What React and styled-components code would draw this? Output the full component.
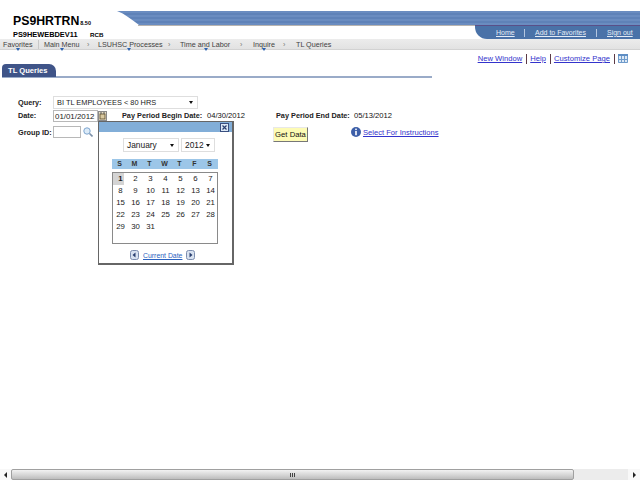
import React from 'react';
import styled, { createGlobalStyle } from 'styled-components';

const GlobalStyle = createGlobalStyle`
  html, body {
    margin: 0;
    padding: 0;
    background: #fff;
    overflow: hidden;
  }
  body {
    font-family: "Liberation Sans", Arial, sans-serif;
    font-size: 8px;
    color: #000;
  }
`;

const navItems = [
  { label: 'Favorites', width: 35, arrow: 12.5 },
  { label: 'Main Menu', width: 43, arrow: 15.5, sep: 'bar' },
  { label: 'LSUHSC Processes', width: 70, arrow: 28.5, sep: 'gt', sepWidth: 11 },
  { label: 'Time and Labor', width: 60, arrow: 23.5, sep: 'gt', sepWidth: 12 },
  { label: 'Inquire', width: 30, arrow: 8.5, sep: 'gt', sepWidth: 13 },
  { label: 'TL Queries', width: 50, sep: 'gt', sepWidth: 13 },
];

const week = ['S', 'M', 'T', 'W', 'T', 'F', 'S'];
const days = Array.from({ length: 31 }, (_, i) => i + 1);

const Page = styled.div`
  width: 640px;
  height: 480px;
  display: flex;
  flex-direction: column;
  overflow: hidden;
  position: relative;
`;

const Header = styled.header`
  height: 39px;
  display: flex;
  flex: none;
`;

const Brand = styled.div`
  box-sizing: border-box;
  width: 117px;
  padding: 15px 0 0 13px;
  flex: none;
`;

const AppName = styled.div`
  font-size: 12.3px;
  line-height: 13px;
  font-weight: bold;
  white-space: nowrap;

  small {
    font-size: 5.5px;
    margin-left: 1px;
  }
`;

const Server = styled.div`
  margin-top: 0;
  font-size: 7.4px;
  line-height: 10px;
  font-weight: bold;
  display: flex;
  white-space: nowrap;

  span:first-child {
    width: 77px;
  }
  span:last-child {
    font-size: 6.2px;
  }
`;

const HeaderRight = styled.div`
  flex: 1;
  padding-top: 11px;
  display: flex;
  flex-direction: column;
`;

const Banner = styled.div`
  height: 14px;
  background: repeating-linear-gradient(180deg, #6a8cc0 0 2px, #5f82b8 2px 4px);
  clip-path: path('M0 0 C8 3 14 8 22 14 L523 14 L523 0 Z');
`;

const BannerEdge = styled.div`
  height: 1px;
  margin-left: 21px;
  background: linear-gradient(90deg, #b8b4b0 0 337px, #5a4f88 337px);
`;

const TopLinks = styled.nav`
  margin-left: 358px;
  flex: 1;
  background: #4a72a8;
  border-bottom-left-radius: 12px;
  display: flex;
  align-items: center;
  padding-left: 21px;
`;

const TopLink = styled.a`
  box-sizing: border-box;
  color: #e4ecf6;
  font-size: 7px;
  line-height: 8px;
  text-decoration: underline;
  width: ${(p) => p.$width}px;
  margin-right: ${(p) => (p.$divided ? 10 : 0)}px;
  border-right: ${(p) => (p.$divided ? '1px solid #b4c6e0' : 'none')};
  white-space: nowrap;
`;

const NavBar = styled.nav`
  box-sizing: border-box;
  height: 11px;
  flex: none;
  background: linear-gradient(#ececec, #e2e2e2);
  border-bottom: 1px solid #d2d2d2;
  display: flex;
  align-items: center;
  padding-left: 3px;
  color: #3f3f3f;
  font-size: 7.2px;
  white-space: nowrap;
`;

const NavItem = styled.span`
  position: relative;
  width: ${(p) => p.$width}px;
  flex: none;
`;

const NavArrow = styled.i`
  position: absolute;
  left: ${(p) => p.$left}px;
  bottom: -2px;
  width: 0;
  height: 0;
  border-left: 2.5px solid transparent;
  border-right: 2.5px solid transparent;
  border-top: 3px solid #2d62b0;
`;

const NavBarSep = styled.span`
  width: 1px;
  height: 9px;
  margin-right: 5px;
  background: #c8c8c8;
  flex: none;
`;

const NavGt = styled.span`
  color: #777;
  width: ${(p) => p.$width}px;
  flex: none;
`;

const UtilityRow = styled.div`
  display: flex;
  justify-content: flex-end;
  align-items: center;
  height: 13px;
  margin-top: 2px;
  padding-right: 12px;
  font-size: 7.65px;
`;

const BlueLink = styled.a`
  color: #3333cc;
  font-size: ${(p) => p.$size || 7.65}px;
  text-decoration: underline;
  white-space: nowrap;
`;

const Pipe = styled.span`
  width: 1px;
  height: 10px;
  margin: 0 3px 0 4px;
  background: #5c3a46;
`;

const TabStrip = styled.div`
  box-sizing: border-box;
  width: 430px;
  height: 14px;
  margin: -1px 0 0 2px;
  border-bottom: 2px solid #9aabc8;
  display: flex;
  align-items: flex-start;
  flex: none;
`;

const Tab = styled.div`
  box-sizing: border-box;
  width: 54px;
  height: 13px;
  background: #3f5488;
  border-radius: 4px 7px 0 0;
  color: #fff;
  font-size: 7.6px;
  font-weight: bold;
  line-height: 14px;
  padding-left: 6px;
`;

const Form = styled.div`
  padding: 17px 0 0 18px;
  display: flex;
  flex-direction: column;
`;

const Row = styled.div`
  display: flex;
  align-items: center;
  height: ${(p) => p.$height}px;
  white-space: nowrap;
`;

const Label = styled.span`
  font-size: 7.3px;
  font-weight: bold;
  color: #222;
  width: ${(p) => p.$width}px;
  flex: none;
`;

const Value = styled.span`
  font-size: 7.6px;
  color: #111;
  width: ${(p) => p.$width}px;
  flex: none;
`;

const SelectBox = styled.div`
  box-sizing: border-box;
  width: ${(p) => p.$width}px;
  height: ${(p) => p.$height || 13}px;
  border: 1px solid #dedede;
  background: #fff;
  display: flex;
  align-items: center;
  justify-content: space-between;
  padding: 0 4px 0 3px;
  font-size: ${(p) => p.$size || 7.4}px;
  color: #222;
  flex: none;

  &::after {
    content: '';
    border-left: 2.5px solid transparent;
    border-right: 2.5px solid transparent;
    border-top: 3px solid #111;
  }
`;

const TextBox = styled.div`
  box-sizing: border-box;
  width: ${(p) => p.$width}px;
  height: ${(p) => p.$height}px;
  border: 1px solid #b8b8b8;
  background: #fff;
  font-size: 7.9px;
  line-height: 11px;
  padding-left: 1px;
  color: #222;
  flex: none;
`;

const DateIcon = styled.svg`
  width: 9px;
  height: 10px;
  margin: 0 15px 0 0;
  flex: none;
`;

const SearchIcon = styled.svg`
  width: 10px;
  height: 10px;
  margin: 0 180px 0 2px;
  flex: none;
`;

const GetData = styled.button`
  box-sizing: border-box;
  width: 35px;
  height: 15px;
  padding: 0;
  margin: 4px 43px 0 0;
  border: 1px solid;
  border-color: #e8e8e8 #777 #777 #e8e8e8;
  background: #fdfbb4;
  font-family: inherit;
  font-size: 7.7px;
  color: #111;
  flex: none;
`;

const InfoIcon = styled.svg`
  width: 10px;
  height: 10px;
  margin-right: 2px;
  flex: none;
`;

const Calendar = styled.div`
  position: absolute;
  left: 98px;
  top: 121px;
  width: 136px;
  height: 144px;
  box-sizing: border-box;
  border: 1px solid #666;
  border-right-width: 2px;
  border-bottom-width: 2px;
  background: #fff;
  display: flex;
  flex-direction: column;
  align-items: flex-start;
`;

const CalendarBar = styled.div`
  align-self: stretch;
  height: 10px;
  background: #82aed8;
  display: flex;
  justify-content: flex-end;
  align-items: center;
  padding-right: 3px;
`;

const CloseButton = styled.svg`
  width: 9px;
  height: 9px;
`;

const Pickers = styled.div`
  display: flex;
  gap: 2px;
  margin: 6px 0 0 24px;
`;

const WeekHead = styled.div`
  margin: 7px 0 0 13px;
  width: 106px;
  height: 10px;
  background: #9cc6e8;
  display: grid;
  grid-template-columns: repeat(7, 15px);
  font-size: 7px;
  font-weight: bold;
  line-height: 10px;
  text-align: center;
  color: #333;
`;

const DayGrid = styled.div`
  box-sizing: border-box;
  margin: 3px 0 0 13px;
  width: 106px;
  height: 72px;
  border: 1px solid #8a8a8a;
  display: grid;
  grid-template-columns: repeat(7, 15px);
  grid-auto-rows: 12px;
  align-content: start;
  font-size: 7.8px;
  text-align: center;
`;

const Day = styled.div`
  line-height: 12px;
  color: #1a1a1a;
  font-weight: ${(p) => (p.$selected ? 'bold' : 'normal')};
  background: ${(p) => (p.$selected ? 'linear-gradient(#d4d4d4, #d4d4d4) no-repeat left / 11px 100%' : 'transparent')};
`;

const CalendarFoot = styled.div`
  margin: 6px 0 0 31px;
  display: flex;
  align-items: center;
  gap: 4px;
  font-size: 6.9px;
`;

const CurrentDate = styled.a`
  color: #2a62c0;
  text-decoration: underline;
  white-space: nowrap;
`;

const ArrowBtn = styled.svg`
  width: 9px;
  height: 10px;
`;

const ScrollBar = styled.div`
  margin-top: auto;
  height: 11px;
  background: #f8f8f8;
  display: flex;
  align-items: center;
  flex: none;
`;

const ScrollArrow = styled.div`
  width: ${(p) => p.$width}px;
  flex: none;
  display: flex;
  justify-content: center;

  &::after {
    content: '';
    border-top: 3px solid transparent;
    border-bottom: 3px solid transparent;
    ${(p) => (p.$right ? 'border-left: 3px solid #222;' : 'border-right: 3px solid #222;')}
  }
`;

const ScrollThumb = styled.div`
  box-sizing: border-box;
  width: 563px;
  height: 11px;
  border: 1px solid #a0a0a0;
  border-radius: 2px;
  background: linear-gradient(#f2f2f2, #d6d6d6 55%, #bdbdbd);
  display: flex;
  justify-content: center;
  align-items: center;
  gap: 1px;

  i {
    width: 1px;
    height: 4px;
    background: #444;
  }
`;

const ScrollTrack = styled.div`
  flex: 1;
  height: 100%;
  background: #ececec;
`;

export default function App() {
  return (
    <Page>
      <GlobalStyle />
      <Header>
        <Brand>
          <AppName>PS9HRTRN<small>8.50</small></AppName>
          <Server><span>PS9HEWEBDEV11</span><span>RCB</span></Server>
        </Brand>
        <HeaderRight>
          <Banner />
          <BannerEdge />
          <TopLinks>
            <TopLink $width={29} $divided>Home</TopLink>
            <TopLink $width={62} $divided>Add to Favorites</TopLink>
            <TopLink $width={28}>Sign out</TopLink>
          </TopLinks>
        </HeaderRight>
      </Header>

      <NavBar>
        {navItems.map((item) => (
          <React.Fragment key={item.label}>
            {item.sep === 'bar' && <NavBarSep />}
            {item.sep === 'gt' && <NavGt $width={item.sepWidth}>›</NavGt>}
            <NavItem $width={item.width}>
              {item.label}
              {item.arrow && <NavArrow $left={item.arrow} />}
            </NavItem>
          </React.Fragment>
        ))}
      </NavBar>

      <UtilityRow>
        <BlueLink>New Window</BlueLink>
        <Pipe />
        <BlueLink>Help</BlueLink>
        <Pipe />
        <BlueLink>Customize Page</BlueLink>
        <Pipe />
        <svg width="10" height="9" viewBox="0 0 10 9">
          <rect x="0" y="0" width="10" height="9" fill="#dce8f5" />
          <rect x="0" y="0" width="10" height="2" fill="#5f8ec4" />
          <path d="M0.5 2v6.5h9V2M3.5 2v7M6.5 2v7M0 5.5h10" fill="none" stroke="#6f9bcb" strokeWidth="1" />
        </svg>
      </UtilityRow>

      <TabStrip>
        <Tab>TL Queries</Tab>
      </TabStrip>

      <Form>
        <Row $height={14}>
          <Label $width={35}>Query:</Label>
          <SelectBox $width={145}>BI TL EMPLOYEES &lt; 80 HRS</SelectBox>
        </Row>
        <Row $height={13}>
          <Label $width={35}>Date:</Label>
          <TextBox $width={45} $height={12}>01/01/2012</TextBox>
          <DateIcon viewBox="0 0 9 10">
            <rect x="0.5" y="0.5" width="8" height="9" fill="#e8dfc8" stroke="#8a8a8a" />
            <rect x="2" y="3" width="5" height="5" fill="#d8c8a0" stroke="#5a4a2a" strokeWidth="0.8" />
            <path d="M3 1v2M6 1v2" stroke="#555" />
          </DateIcon>
          <Label $width={85}>Pay Period Begin Date:</Label>
          <Value $width={69}>04/30/2012</Value>
          <Label $width={78}>Pay Period End Date:</Label>
          <Value $width={50}>05/13/2012</Value>
        </Row>
        <Row $height={20}>
          <Label $width={35}>Group ID:</Label>
          <TextBox $width={28} $height={12} />
          <SearchIcon viewBox="0 0 10 10">
            <circle cx="4" cy="4" r="3.2" fill="#dcebf8" stroke="#7fa6d0" />
            <path d="M6.5 6.5l3 3" stroke="#7a8fa8" strokeWidth="1.6" />
          </SearchIcon>
          <GetData>Get Data</GetData>
          <InfoIcon viewBox="0 0 10 10">
            <circle cx="5" cy="5" r="5" fill="#3d5fa8" />
            <rect x="4.2" y="1.6" width="1.6" height="1.5" fill="#fff" />
            <rect x="4.2" y="4" width="1.6" height="4.2" fill="#fff" />
          </InfoIcon>
          <BlueLink $size={7.6}>Select For Instructions</BlueLink>
        </Row>
      </Form>

      <Calendar>
        <CalendarBar>
          <CloseButton viewBox="0 0 9 9">
            <rect x="0.5" y="0.5" width="8" height="8" fill="#dce8f5" stroke="#3a4f80" />
            <path d="M2.5 2.5l4 4M6.5 2.5l-4 4" stroke="#2a3f70" strokeWidth="1.2" />
          </CloseButton>
        </CalendarBar>
        <Pickers>
          <SelectBox $width={56} $height={14} $size={8.4}>January</SelectBox>
          <SelectBox $width={34} $height={14} $size={8.4}>2012</SelectBox>
        </Pickers>
        <WeekHead>
          {week.map((d, i) => <div key={i}>{d}</div>)}
        </WeekHead>
        <DayGrid>
          {days.map((d) => <Day key={d} $selected={d === 1}>{d}</Day>)}
        </DayGrid>
        <CalendarFoot>
          <ArrowBtn viewBox="0 0 9 10">
            <rect x="0.5" y="0.5" width="8" height="9" rx="2" fill="#d8e2f0" stroke="#7c8eb0" />
            <path d="M5.5 2.5v5L2.5 5z" fill="#2a3f70" />
          </ArrowBtn>
          <CurrentDate>Current Date</CurrentDate>
          <ArrowBtn viewBox="0 0 9 10">
            <rect x="0.5" y="0.5" width="8" height="9" rx="2" fill="#d8e2f0" stroke="#7c8eb0" />
            <path d="M3.5 2.5v5l3-2.5z" fill="#2a3f70" />
          </ArrowBtn>
        </CalendarFoot>
      </Calendar>

      <ScrollBar>
        <ScrollArrow $width={11} />
        <ScrollThumb><i /><i /><i /></ScrollThumb>
        <ScrollTrack />
        <ScrollArrow $width={12} $right />
      </ScrollBar>
    </Page>
  );
}
